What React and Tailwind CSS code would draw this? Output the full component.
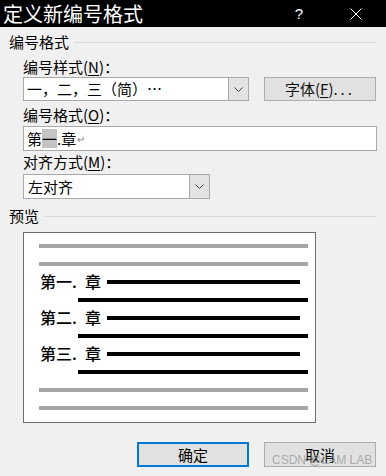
import React from "react";

const Chevron = () => (
  <svg width="9" height="5" viewBox="0 0 9 5" fill="none">
    <path d="M0.5 0.5 L4.5 4.5 L8.5 0.5" stroke="#404040" strokeWidth="1" />
  </svg>
);

const Label = ({ text, hot }) => (
  <div className="h-[17px] text-[15px] leading-[17px] pl-[14px] whitespace-nowrap">
    {text}(<span className="underline underline-offset-2">{hot}</span>)：
  </div>
);

const Header = ({ text }) => (
  <div className="h-[16px] flex items-center">
    <span className="text-[15px] leading-[16px] whitespace-nowrap">{text}</span>
    <div className="flex-1 h-px bg-[#dadada] ml-[5px]" />
  </div>
);

const GrayLine = () => (
  <div className="h-[18px] flex items-center pl-[15px] pr-[7px]">
    <div className="flex-1 h-[4px] bg-[#a6a6a6]" />
  </div>
);

const UnderLine = () => (
  <div className="h-[18px] flex items-center pl-[54px] pr-[7px]">
    <div className="flex-1 h-[4px] bg-black" />
  </div>
);

const ChapterRow = ({ num }) => (
  <div className="h-[18px] flex items-center pl-[16px] pr-[15px]">
    <span className="inline-block w-[45px] text-[16px] leading-[16px] -mt-[3px] font-medium whitespace-nowrap">第{num}.</span>
    <span className="text-[16px] leading-[16px] -mt-[3px] font-medium">章</span>
    <div className="flex-1 h-[4px] bg-black ml-[6px]" />
  </div>
);

export default function App() {
  return (
    <div className="w-[386px] h-[476px] bg-[#f0f0f0] relative overflow-hidden text-black font-['Noto_Sans_CJK_SC',sans-serif]">
      {/* 标题栏 */}
      <div className="h-[27px] bg-black flex items-center text-white">
        <div className="flex-1 text-[20px] leading-[27px] pl-[3px] whitespace-nowrap">定义新编号格式</div>
        <div className="text-[15px] leading-none font-['Liberation_Sans',sans-serif] mr-[47px] font-light">?</div>
        <svg width="12" height="12" viewBox="0 0 12 12" className="mr-[24px]">
          <path d="M0.5 0.5 L11.5 11.5 M11.5 0.5 L0.5 11.5" stroke="white" strokeWidth="1" />
        </svg>
      </div>

      <div className="px-[9px]">
        <div className="mt-[7px]">
          <Header text="编号格式" />
        </div>

        <div className="mt-[8px]">
          <Label text="编号样式" hot="N" />
        </div>
        <div className="mt-[2px] pl-[14px] flex">
          <div className="w-[226px] h-[24px] border border-[#a8a8a8] bg-white flex">
            <div className="flex-1 text-[15px] leading-[22px] pl-[3px] whitespace-nowrap">一，二，三（简）…</div>
            <div className="w-[20px] bg-[#e3e3e3] border-l border-[#a8a8a8] flex items-center justify-center">
              <Chevron />
            </div>
          </div>
          <button className="ml-[15px] w-[112px] h-[24px] bg-[#e1e1e1] border border-[#adadad] text-[15px] leading-[22px] text-[#111] whitespace-nowrap">
            字体(<span className="underline underline-offset-2">F</span>)<span className="tracking-[3px]">...</span>
          </button>
        </div>

        <div className="mt-[5px]">
          <Label text="编号格式" hot="O" />
        </div>
        <div className="mt-[3px] ml-[14px] w-[354px] h-[25px] border border-[#a8a8a8] bg-white flex items-center pl-[3px] text-[15px] leading-[19px] whitespace-nowrap">
          <span>第</span>
          <span className="bg-[#c4c4c4]">一</span>
          <span>.章</span>
          <span className="text-[10px] text-[#8a8a8a] ml-[1px]">↵</span>
        </div>

        <div className="mt-[2px]">
          <Label text="对齐方式" hot="M" />
        </div>
        <div className="mt-[4px] ml-[14px] w-[187px] h-[25px] border border-[#a8a8a8] bg-white flex">
          <div className="flex-1 text-[15px] leading-[23px] pl-[4px]">左对齐</div>
          <div className="w-[20px] bg-[#e3e3e3] border-l border-[#a8a8a8] flex items-center justify-center">
            <Chevron />
          </div>
        </div>

        <div className="mt-[9px]">
          <Header text="预览" />
        </div>

        {/* 预览框 */}
        <div className="mt-[8px] ml-[14px] w-[293px] h-[191px] border border-[#6e6e6e] bg-white pt-[4px]">
          <GrayLine />
          <GrayLine />
          <ChapterRow num="一" />
          <UnderLine />
          <ChapterRow num="二" />
          <UnderLine />
          <ChapterRow num="三" />
          <UnderLine />
          <GrayLine />
          <GrayLine />
        </div>

        <div className="mt-[19px] ml-[128px] flex gap-[15px]">
          <button className="w-[112px] h-[25px] bg-[#e1e1e1] border-2 border-[#0078d7] text-[15px] leading-[21px]">确定</button>
          <button className="w-[112px] h-[25px] bg-[#e1e1e1] border border-[#adadad] text-[15px] leading-[23px]">取消</button>
        </div>
      </div>

      {/* 水印 */}
      <div className="absolute left-[272px] top-[453px] text-[12px] leading-[14px] text-[#9a9a9a]/80 font-['Liberation_Sans',sans-serif] whitespace-nowrap">
        CSDN @LAM LAB
      </div>
    </div>
  );
}
